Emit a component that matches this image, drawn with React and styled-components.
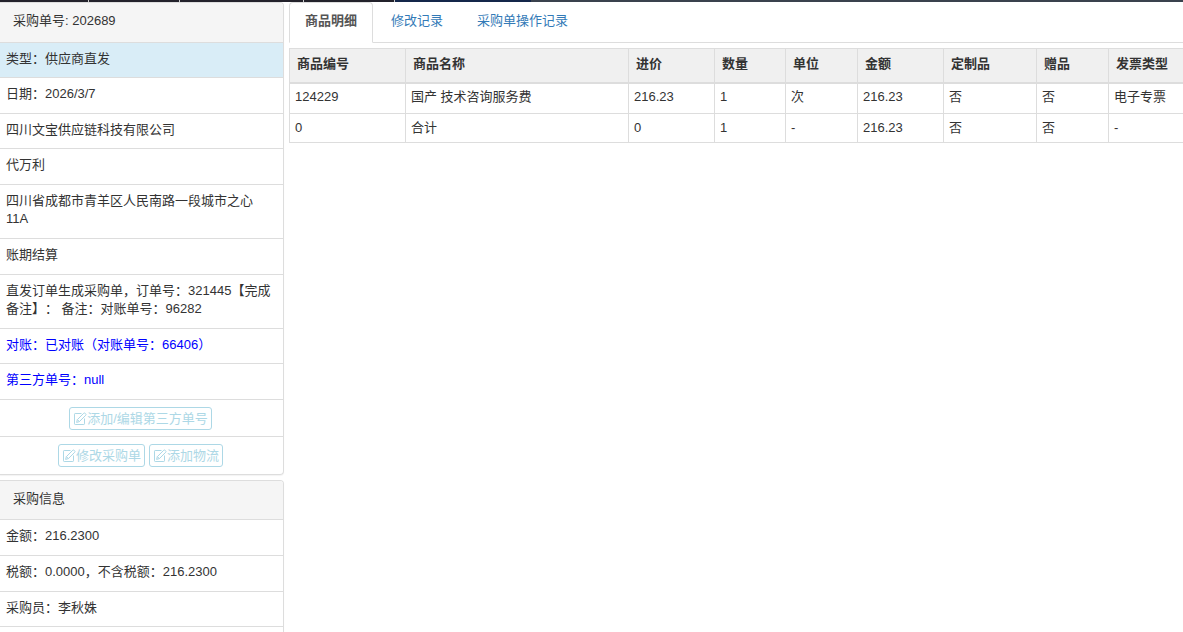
import React from 'react';
import styled, {createGlobalStyle} from 'styled-components';

const orderRows = [
    {text: '类型：供应商直发', info: true, dense: true},
    {text: '日期：2026/3/7'},
    {text: '四川文宝供应链科技有限公司', dense: true},
    {text: '代万利'},
    {text: '四川省成都市青羊区人民南路一段城市之心\n11A'},
    {text: '账期结算'},
    {text: '直发订单生成采购单，订单号：321445【完成备注】： 备注：对账单号：96282'},
    {text: '对账：已对账（对账单号：66406）', blue: true, dense: true},
    {text: '第三方单号：null', blue: true},
];

const purchaseRows = [
    {text: '金额：216.2300'},
    {text: '税额：0.0000，不含税额：216.2300'},
    {text: '采购员：李秋姝', dense: true},
    {text: '\u00a0'},
];

const columns = [
    {title: '商品编号', width: 116},
    {title: '商品名称', width: 223},
    {title: '进价', width: 86},
    {title: '数量', width: 71},
    {title: '单位', width: 72},
    {title: '金额', width: 86},
    {title: '定制品', width: 93},
    {title: '赠品', width: 72},
    {title: '发票类型'},
];

const products = [
    ['124229', '国产 技术咨询服务费', '216.23', '1', '次', '216.23', '否', '否', '电子专票'],
    ['0', '合计', '0', '1', '-', '216.23', '否', '否', '-'],
];

const EditIcon = () => (
    <svg width="14" height="14" viewBox="0 0 14 14" fill="none" stroke="currentColor" aria-hidden="true">
        <path d="M8.5 1.5H2.2Q1.5 1.5 1.5 2.2V11.8Q1.5 12.5 2.2 12.5H10.8Q11.5 12.5 11.5 11.8V6.5" />
        <path d="M3.6 10.4L4.4 7.6L10.8 1.2Q11.4 0.7 12 1.2L12.8 2Q13.3 2.6 12.8 3.2L6.4 9.6ZM4.4 7.6L6.4 9.6" />
    </svg>
);

const EditButton = ({children}) => (
    <Button type="button"><EditIcon />{children}</Button>
);

const App = () => (
    <>
        <GlobalStyle />
        <TopBar />
        <Page>
            <Sidebar>
                <Panel>
                    <PanelHeading>采购单号: 202689</PanelHeading>
                    <List>
                        {orderRows.map(({text, info, blue, dense}) =>
                            <Row key={text} $info={info} $blue={blue} $dense={dense}>{text}</Row>
                        )}
                        <Actions>
                            <EditButton>添加/编辑第三方单号</EditButton>
                        </Actions>
                        <Actions $last>
                            <EditButton>修改采购单</EditButton>
                            <EditButton>添加物流</EditButton>
                        </Actions>
                    </List>
                </Panel>
                <Panel>
                    <PanelHeading $dense>采购信息</PanelHeading>
                    <List>
                        {purchaseRows.map(({text, dense}) =>
                            <Row key={text} $dense={dense}>{text}</Row>
                        )}
                    </List>
                </Panel>
            </Sidebar>
            <Main>
                <Tabs>
                    <Tab href="#products" $active>商品明细</Tab>
                    <Tab href="#changes">修改记录</Tab>
                    <Tab href="#operations">采购单操作记录</Tab>
                </Tabs>
                <Table>
                    <colgroup>
                        {columns.map(({title, width}) => <col key={title} width={width} />)}
                    </colgroup>
                    <thead>
                        <tr>
                            {columns.map(({title}) => <Th key={title} scope="col">{title}</Th>)}
                        </tr>
                    </thead>
                    <tbody>
                        {products.map(cells =>
                            <tr key={cells[0]}>
                                {cells.map((cell, i) => <Td key={columns[i].title}>{cell}</Td>)}
                            </tr>
                        )}
                    </tbody>
                </Table>
            </Main>
        </Page>
    </>
);


const GlobalStyle = createGlobalStyle`
  * {
    box-sizing: border-box;
  }
  html, body, #root {
    height: 100%;
  }
  body {
    margin: 0;
    overflow: hidden;
    background: #fff;
    color: #333;
    font-family: "Liberation Sans", "Noto Sans CJK SC", sans-serif;
    font-size: 13px;
    line-height: 18px;
    text-spacing-trim: space-all;
  }
  #root {
    display: flex;
    flex-direction: column;
  }
`;


const TopBar = styled.div`
  flex: none;
  height: 2px;
  background: linear-gradient(
    90deg,
    #23222b 88px, #ccc 88px, #ccc 89px,
    #23222b 89px, #23222b 179px, #ccc 179px, #ccc 180px,
    #23222b 180px, #23222b 303px, #ccc 303px, #ccc 304px,
    #23222b 304px, #23222b 394px, #ccc 394px, #ccc 395px,
    #14264a 395px, #14264a 531px, #3a424d 531px
  );
`;


const Page = styled.div`
  flex: 1;
  min-height: 0;
  display: flex;
  gap: 5px;
`;


const Sidebar = styled.aside`
  flex: none;
  width: 284px;
  display: flex;
  flex-direction: column;
  gap: 5px;
`;


const Panel = styled.section`
  flex: none;
  border: 1px solid #ddd;
  border-left: none;
  border-radius: 0 4px 4px 0;
  box-shadow: 0 1px 1px rgba(0, 0, 0, 0.05);
  overflow: hidden;
`;


const PanelHeading = styled.div`
  padding: ${p => p.$dense ? '9px 13px 11px' : '9px 13px 12px'};
  background: #f5f5f5;
`;


const List = styled.ul`
  margin: 0;
  padding: 0;
  list-style: none;
`;


const Row = styled.li`
  padding: ${p => p.$dense ? '7px 6px 9px' : '7px 6px 10px'};
  border-top: 1px solid #ddd;
  background: ${p => p.$info ? '#d9edf7' : '#fff'};
  color: ${p => p.$blue ? '#00f' : 'inherit'};
  white-space: pre-line;
`;


const Actions = styled.li`
  display: flex;
  justify-content: center;
  gap: 4px;
  padding: ${p => p.$last ? '7px 8px 7px 6px' : '7px 8px 6px 6px'};
  border-top: 1px solid #ddd;
`;


const Button = styled.button`
  display: flex;
  align-items: center;
  height: 23px;
  padding: 0 3px;
  border: 1px solid #add8e6;
  border-radius: 3px;
  background: #fff;
  color: #add8e6;
  font: inherit;
  white-space: nowrap;
  cursor: pointer;
`;


const Main = styled.main`
  flex: 1;
  min-width: 0;
  overflow: hidden;
`;


const Tabs = styled.nav`
  display: flex;
  gap: 2px;
  margin-bottom: 5px;
  border-bottom: 1px solid #ddd;
`;


const Tab = styled.a`
  margin-bottom: -1px;
  padding: 9px 15px 12px;
  border: 1px solid ${p => p.$active ? '#ddd' : 'transparent'};
  border-bottom-color: ${p => p.$active ? '#fff' : 'transparent'};
  border-radius: 4px 4px 0 0;
  color: ${p => p.$active ? '#555' : '#337ab7'};
  font-weight: ${p => p.$active ? 'bold' : 'normal'};
  text-decoration: none;
`;


const Table = styled.table`
  width: 100%;
  min-width: 909px;
  table-layout: fixed;
  border-collapse: separate;
  border-spacing: 0;
  border-top: 1px solid #ddd;
  border-left: 1px solid #ddd;
`;


const Th = styled.th`
  padding: 6px 7px 9px;
  border-right: 1px solid #ddd;
  border-bottom: 2px solid #ddd;
  background: #f0f0f0;
  text-align: left;
`;


const Td = styled.td`
  padding: 5px;
  border-right: 1px solid #ddd;
  border-bottom: 1px solid #ddd;
  tr:first-child > & {
    padding: 4px 5px 7px;
  }
`;

export default App;
